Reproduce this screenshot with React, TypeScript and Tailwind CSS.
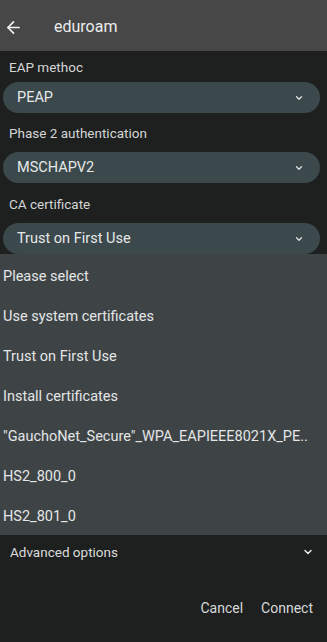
import { ArrowLeft, ChevronDown } from 'lucide-react';

/**
 * Wi-Fi network config dialog (eduroam) with the CA certificate menu open
 */

const FIELDS = [
  { label: 'EAP methoc', value: 'PEAP', gap: 'h-[31px]' },
  { label: 'Phase 2 authentication', value: 'MSCHAPV2', gap: 'h-[39px]' },
  { label: 'CA certificate', value: 'Trust on First Use', gap: 'h-[40px]' },
];

const MENU_ITEMS = [
  'Please select',
  'Use system certificates',
  'Trust on First Use',
  'Install certificates',
  '"GauchoNet_Secure"_WPA_EAPIEEE8021X_PE..',
  'HS2_800_0',
  'HS2_801_0',
];

function Field({ label, value, gap }: { label: string; value: string; gap: string }) {
  return (
    <div className="flex flex-col">
      <div className={`${gap} flex items-center pl-[9px] pt-[2px] text-[13.5px] text-[#d4d6d6]`}>{label}</div>
      <div className="ml-[3px] mr-[7px] h-[31px] rounded-full bg-[#3b494c] flex items-center justify-between pl-[14px] pr-[16px]">
        <span className="text-[14.5px] text-[#e6e8e8]">{value}</span>
        <ChevronDown className="w-[10px] h-[10px] text-[#dfe2e2]" strokeWidth={3} />
      </div>
    </div>
  );
}

export default function App() {
  return (
    <div className="w-[327px] h-[642px] bg-[#1e1f1f] flex flex-col overflow-hidden font-['Roboto','Liberation_Sans',sans-serif]">
      {/* Header */}
      <div className="h-[51px] shrink-0 bg-[#464746] flex items-center pt-[3px]">
        <ArrowLeft className="ml-[4px] w-[19px] h-[19px] text-[#f2f2f2]" strokeWidth={2.2} />
        <span className="ml-[31px] text-[16px] text-[#ececec]">eduroam</span>
      </div>

      {/* Form fields */}
      <div className="flex flex-col">
        {FIELDS.map((f) => (
          <Field key={f.label} label={f.label} value={f.value} gap={f.gap} />
        ))}
      </div>

      {/* Open dropdown menu */}
      <div className="h-[281px] shrink-0 bg-[#3e4446] flex flex-col pt-[3px]">
        {MENU_ITEMS.map((item) => (
          <div key={item} className="h-[40px] shrink-0 flex items-center pl-[3px] text-[14.5px] text-[#e4e6e6] whitespace-nowrap">
            {item}
          </div>
        ))}
      </div>

      {/* Advanced options */}
      <div className="h-[34px] shrink-0 flex items-center justify-between pl-[10px] pr-[13px]">
        <span className="text-[13.5px] text-[#d9dbdb]">Advanced options</span>
        <ChevronDown className="w-[12px] h-[12px] text-[#e6e6e6]" strokeWidth={3} />
      </div>

      {/* Actions */}
      <div className="flex justify-end items-center gap-[18px] pr-[14px] mt-[29px]">
        <button type="button" className="text-[14px] text-[#d7d9d9]">Cancel</button>
        <button type="button" className="text-[14px] text-[#d7d9d9]">Connect</button>
      </div>
    </div>
  );
}
